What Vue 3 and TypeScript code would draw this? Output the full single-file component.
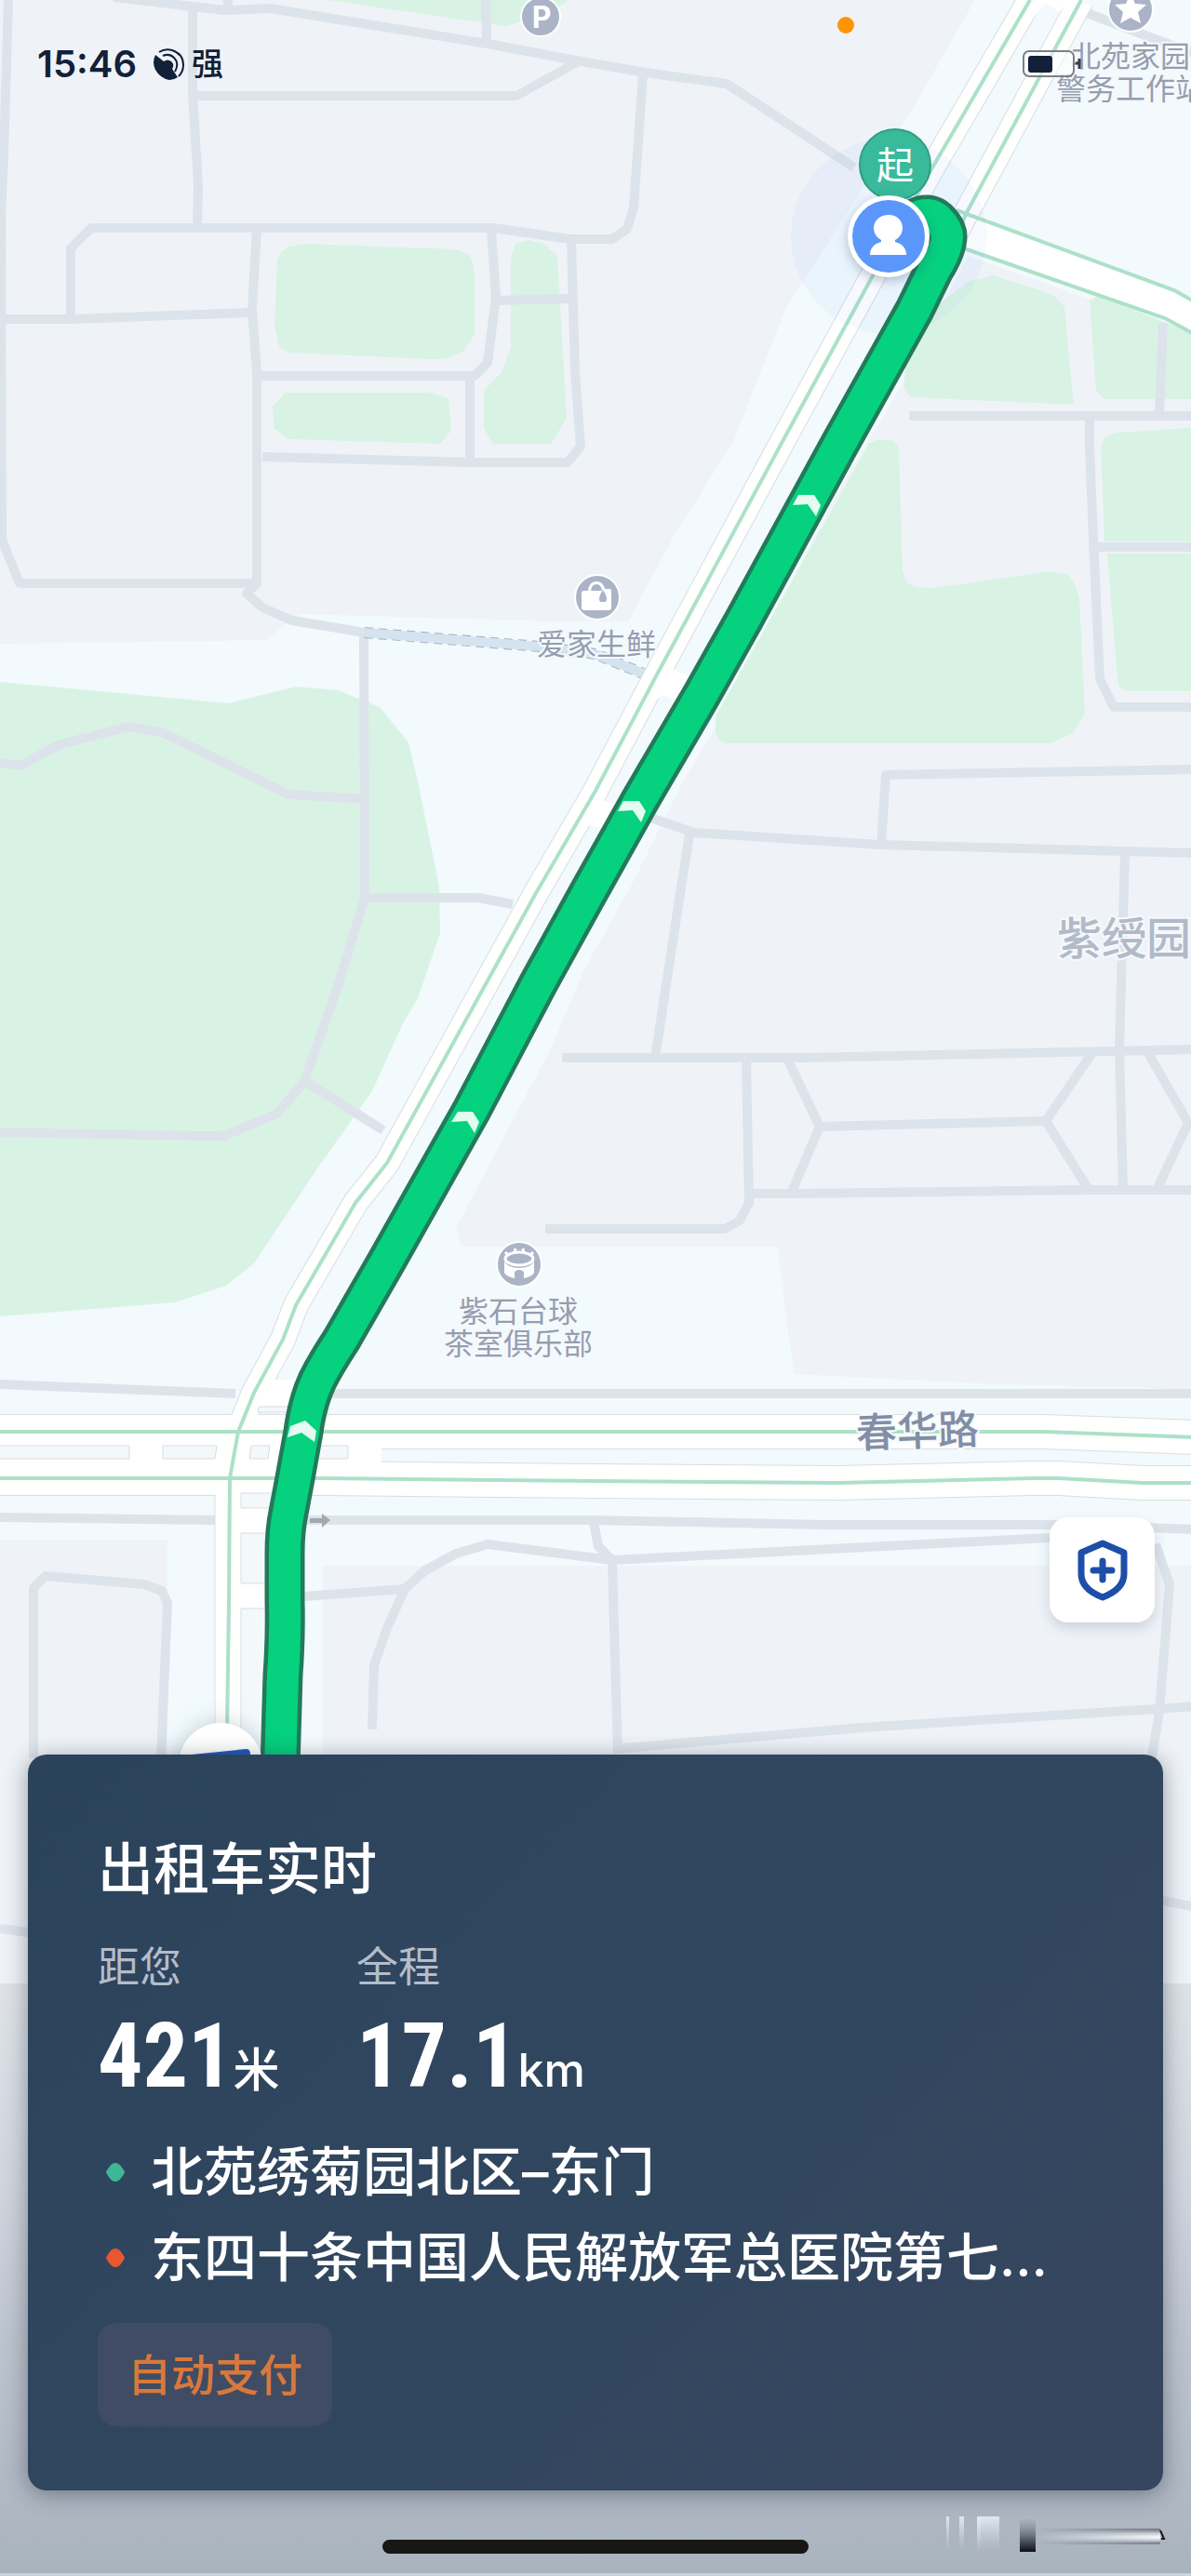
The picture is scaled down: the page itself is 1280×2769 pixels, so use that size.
<script setup lang="ts">
interface Label {
  text: string
  x: number
  y: number
}

interface Metric {
  label: string
  value: string
  unit: string
}

interface Stop {
  kind: 'from' | 'to'
  name: string
}

const blocks: string[] = [
  '0,0 1048,0 979,120 844,333 787,477 726,573 690,640 676,668 600,668 322,660 286,688 0,692',
  '1040,275 1280,360 1280,1493 1073,1488 854,1477 846,1427 836,1340 496,1340 490,1320 592,1127 629,1040 681,947 734,840 770,780 900,530 960,430',
  '0,1655 180,1655 180,2140 0,2140',
  '347,1683 1280,1683 1280,2140 347,2140',
]

const greens: string[] = [
  '351,0 433,12 516,24 543,28 571,20 608,3 610,0',
  '298,280 301,272 310,265 327,262 490,268 504,273 509,284 510,297 510,360 498,378 478,386 461,386 310,379 300,373 295,350',
  '293,437 306,422 463,422 482,428 485,463 473,477 310,472 294,460',
  '549,277 554,262 569,258 584,262 599,275 609,450 592,477 529,477 520,460 520,420 539,400 549,373',
  '1009,327 1040,303 1067,296 1118,312 1134,319 1144,330 1154,435 979,427 971,417 973,393',
  '1171,323 1179,318 1280,357 1280,429 1187,429 1178,420',
  '1183,480 1187,470 1199,465 1280,460 1280,582 1187,582',
  '1190,595 1280,595 1280,743 1211,743 1203,738 1201,730',
  '934,477 942,473 958,473 966,480 970,613 975,627 985,631 1003,632 1130,614 1148,618 1155,628 1160,643 1166,767 1154,787 1130,799 781,799 772,795 769,787 769,770',
  '0,733 245,756 318,738 363,742 408,760 439,798 449,840 472,953 473,1003 449,1073 433,1100 400,1173 343,1253 273,1358 243,1382 188,1400 0,1415',
]

const lanes: string[] = [
  '122,-3 241,11 290,9 524,47 608,63 693,78 781,90 918,180',
  '245,-5 245,11',
  '522,-5 523,46',
  '9,0 4,167 1,233 2,580 21,627 276,627',
  '207,7 207,100 213,200 212,245',
  '212,103 555,103 620,67',
  '76,343 76,267 98,245 531,245 612,257 658,257 674,246 681,223 691,80',
  '2,343 78,343 267,336',
  '276,247 271,333 276,400 276,627 265,638 282,653 314,667 392,680',
  '278,404 510,404 524,390 533,320 528,247',
  '505,405 505,497',
  '535,323 614,321',
  '614,257 618,400 624,480 610,497 506,497 282,491',
  '391,680 392,965 363,1060 327,1163 298,1197 241,1221 204,1221 0,1217',
  '0,820 22,823 65,800 139,781 176,788 310,854 392,859',
  '392,965 514,965 551,972',
  '329,1163 412,1215',
  '1165,10 1171,15 1244,43 1285,58',
  '977,447 1285,447',
  '1250,347 1246,447',
  '1171,447 1171,480 1175,580 1182,730 1197,760 1285,760',
  '1175,588 1285,588',
  '693,877 746,895 946,908 1285,917',
  '741,897 731,960 704,1137',
  '947,908 952,833 1285,827',
  '1209,917 1203,1127 1207,1279',
  '604,1137 864,1137 1285,1128',
  '802,1137 805,1293 795,1312 779,1321 586,1321',
  '808,1283 856,1283 1171,1279 1285,1279',
  '846,1138 881,1211 850,1283',
  '881,1211 1124,1205',
  '1173,1133 1124,1205 1169,1277',
  '1234,1132 1277,1207 1244,1277',
  '0,1488 253,1498',
  '350,1498 1285,1498',
  '0,1631 231,1634',
  '320,1634 631,1634 885,1639 1130,1639 1285,1644',
  '638,1636 643,1662 658,1677',
  '400,1859 402,1790 416,1750 435,1708 457,1688 490,1670 524,1660 658,1677 1128,1653 1160,1651',
  '327,1716 435,1708',
  '658,1680 664,1885',
  '660,1880 926,1857 1244,1837 1285,1834',
  '1242,1660 1257,1703 1246,1840 1238,1888',
  '36,1890 36,1707 49,1694 155,1703 174,1710 180,1723 173,1890',
  '0,2073 36,2078',
  '1244,2042 1285,2050',
]

const crossing = '392,680 580,695 640,703 701,728'

const avenueWest = '1107,0 1001,182 936,300 838,480 705,727 640,850 576,960 416,1250 382,1293 318,1403 304,1440 273,1497 256,1539'
const avenueEast = '1162,0 1038,230 983,333'
const streetUpper = '-5,1539 1122,1539 1285,1545'
const streetLower = '-5,1589 347,1589 640,1592 901,1594 1109,1589 1138,1589 1228,1594 1285,1594'

const openings: string[] = [
  '1112,-4 1152,-4 1139,13 1124,3 1110,20',
  '712,712 728,722 745,729 731,754 713,747 700,755',
  '640,850 646,860 668,865 652,892 631,887 622,894',
  '285,1483 345,1483 330,1512 262,1512',
  '0,1545 410,1545 410,1580 0,1580',
  '232,1600 325,1600 310,1731 300,1890 232,1890',
]

const islands: string[] = [
  '-5,1554 139,1554 139,1568 -5,1568',
  '175,1554 233,1554 231,1568 175,1568',
  '270,1554 290,1554 288,1568 268,1568',
  '325,1554 374,1554 374,1568 325,1568',
  '278,1512 320,1512 320,1518 277,1518',
  '259,1605 310,1605 310,1621 259,1621',
  '259,1648 310,1648 310,1702 259,1702',
  '259,1729 310,1729 310,1900 259,1900',
]

const route =
  'M301 1900 L304 1800 Q307 1760 306 1720 L306 1670 Q306 1645 310 1626 L317 1589 L326 1539 Q330 1508 341 1484 Q350 1466 367 1440 L417 1353 L507 1193 L578 1058 L632 960 L688 860 L754 747 L799 667 L901 480 L983 333 L1004 290 Q1018 268 1018 254 Q1018 246 1008 236 Q998 227 984 234'

const chevrons: string[] = [
  '858,532 875,532 882,543 877,555 868,542 852,543',
  '670,861 687,861 694,872 689,884 680,871 664,872',
  '492,1195 508,1195 515,1206 510,1218 502,1205 485,1206',
  '312,1533 328,1527 340,1538 338,1550 324,1540 309,1545',
]

const poiLabels: Label[] = [
  { text: '北苑家园', x: 1215, y: 72 },
  { text: '警务工作站', x: 1215, y: 107 },
  { text: '爱家生鲜', x: 641, y: 704 },
  { text: '紫石台球', x: 557, y: 1421 },
  { text: '茶室俱乐部', x: 557, y: 1456 },
]

const metrics: Metric[] = [
  { label: '距您', value: '421', unit: '米' },
  { label: '全程', value: '17.1', unit: 'km' },
]

const stops: Stop[] = [
  { kind: 'from', name: '北苑绣菊园北区–东门' },
  { kind: 'to', name: '东四十条中国人民解放军总医院第七…' },
]
</script>

<template>
  <main class="screen">
    <svg class="map" viewBox="0 0 1280 2769" preserveAspectRatio="xMidYMid slice" role="img" aria-label="地图">
      <defs>
        <linearGradient id="shade" x1="0" y1="0" x2="0" y2="1">
          <stop offset="0" stop-color="#dfe3e8" />
          <stop offset="0.35" stop-color="#cfd4dd" />
          <stop offset="0.6" stop-color="#bdc4ce" />
          <stop offset="0.85" stop-color="#b0b9c4" />
          <stop offset="1" stop-color="#a9b3bd" />
        </linearGradient>
        <linearGradient id="bar" x1="0" y1="0" x2="0" y2="1">
          <stop offset="0" stop-color="#8e96a4" stop-opacity="0.2" />
          <stop offset="0.5" stop-color="#6d7380" />
          <stop offset="1" stop-color="#0d0f16" />
        </linearGradient>
        <linearGradient id="glow" x1="0" y1="0" x2="0" y2="1">
          <stop offset="0" stop-color="#e4e9f0" />
          <stop offset="1" stop-color="#c9d0da" stop-opacity="0" />
        </linearGradient>
        <linearGradient id="streak" x1="0" y1="0" x2="0" y2="1">
          <stop offset="0" stop-color="#4a505c" stop-opacity="0.7" />
          <stop offset="0.3" stop-color="#c9ced6" />
          <stop offset="0.55" stop-color="#ffffff" />
          <stop offset="0.75" stop-color="#c9ced6" />
          <stop offset="1" stop-color="#4a505c" stop-opacity="0.6" />
        </linearGradient>
        <linearGradient id="streakFade" x1="0" y1="0" x2="1" y2="0">
          <stop offset="0" stop-color="#000000" />
          <stop offset="1" stop-color="#ffffff" />
        </linearGradient>
        <mask id="fade" maskUnits="userSpaceOnUse" x="1113" y="2710" width="140" height="40">
          <rect x="1113" y="2710" width="140" height="40" fill="url(#streakFade)" />
        </mask>
      </defs>

      <rect class="ground" width="1280" height="2769" />
      <polygon v-for="(p, i) in blocks" :key="`b${i}`" class="block" :points="p" />
      <polygon v-for="(p, i) in greens" :key="`g${i}`" class="green" :points="p" />
      <polyline v-for="(p, i) in lanes" :key="`l${i}`" class="lane" :points="p" />

      <polyline class="crossing-edge" :points="crossing" />
      <polyline class="crossing" :points="crossing" />

      <polygon class="road-fill" points="1028,226 1262,312 1285,325 1285,360 1252,342 1036,267" />
      <polyline class="casing avenue" :points="avenueWest" />
      <polyline class="casing avenue" :points="avenueEast" />
      <polyline class="casing street" :points="streetUpper" />
      <polyline class="casing street" :points="streetLower" />
      <rect class="casing-box" x="231" y="1600" width="28" height="300" />
      <polyline class="paving avenue" :points="avenueWest" />
      <polyline class="paving avenue" :points="avenueEast" />
      <polyline class="paving street" :points="streetUpper" />
      <polyline class="paving street" :points="streetLower" />
      <polygon v-for="(p, i) in openings" :key="`o${i}`" class="road-fill" :points="p" />
      <polygon v-for="(p, i) in islands" :key="`i${i}`" class="island" :points="p" />

      <polyline class="traffic" :points="avenueWest" />
      <polyline class="traffic" points="1162,0 1038,230 1030,250" />
      <polyline class="traffic" points="256,1539 247,1589 246,1723 244,1860" />
      <polyline class="traffic" :points="streetUpper" />
      <polyline class="traffic" :points="streetLower" />
      <polyline class="traffic" points="1028,226 1262,312 1285,325" />
      <polyline class="traffic" points="1036,267 1252,342 1285,360" />

      <path class="one-way" d="M333 1632h13v-5l9 7-9 8v-5h-13z" />

      <g class="halo-text">
        <text v-for="l in poiLabels" :key="l.text" class="poi" :x="l.x" :y="l.y">{{ l.text }}</text>
        <text class="district" x="1208" y="1026">紫绶园</text>
        <text class="street-name" x="986" y="1554" transform="rotate(-2 986 1540)">春华路</text>
      </g>

      <g class="pin">
        <circle cx="581" cy="18" r="21" />
        <circle cx="1215" cy="10" r="24" />
        <circle cx="642" cy="642" r="24" />
        <circle cx="558" cy="1359" r="24" />
      </g>
      <text class="parking" x="582" y="30">P</text>
      <path class="glyph" d="M1215 -7l5 11 12 1-9 8 3 12-11-6-11 6 3-12-9-8 12-1z" />
      <path class="glyph" d="M628 635h4q1-10 9-10 7 0 9 8h5q2 0 2 2v18q0 3-3 3h-26q-3 0-3-3v-16q0-2 3-2zm7 0h12q-1-7-6-7t-6 7z" fill-rule="evenodd" />
      <path class="glyph-line" d="M648 634q-6 9-3 13h6q3-4-3-13z" />
      <ellipse class="rim" cx="558" cy="1353" rx="15" ry="7" />
      <path class="glyph" d="M542 1356q4 7 16 7t16-7v12q-2 4-11 6v-7q-5-4-10 0v7q-9-2-11-6z" />
      <path class="rim" d="M553 1347l1-5M563 1347l-1-5M546 1349l-3-3M570 1349l3-3" />

      <circle class="accuracy" cx="955" cy="254" r="105" />
      <circle class="start" cx="962" cy="177" r="38" />
      <text class="start-text" x="962" y="192">起</text>
      <path class="route-edge" :d="route" />
      <path class="route" :d="route" />
      <polygon v-for="(p, i) in chevrons" :key="`c${i}`" class="chevron" :points="p" />

      <circle class="me" cx="955" cy="254" r="44" />
      <circle class="me-disc" cx="955" cy="254" r="39" />
      <path class="glyph" d="M955 231c9 0 15 6 15 14 0 6-3 10-8 13v2c8 2 12 7 12 14h-39c0-7 4-12 12-14v-2c-5-3-8-7-8-13 0-8 7-14 16-14z" />

      <circle class="cab" cx="237" cy="1897" r="45" />
      <path class="cab-body" d="M206 1886l59-6q4 0 4 6v10h-63z" />

      <rect x="0" y="2132" width="1280" height="637" fill="url(#shade)" />
      <rect x="0" y="2766" width="1280" height="3" fill="#c9d3dd" />
      <g>
        <rect x="1017" y="2705" width="3" height="38" fill="url(#glow)" />
        <rect x="1031" y="2705" width="5" height="38" fill="url(#glow)" />
        <rect x="1050" y="2705" width="24" height="38" fill="url(#glow)" />
        <rect x="1050" y="2705" width="4" height="38" fill="url(#glow)" />
        <rect x="1096" y="2708" width="17" height="35" fill="url(#bar)" />
        <rect x="1113" y="2718" width="134" height="17" fill="url(#streak)" mask="url(#fade)" />
        <path d="M1247 2720l4 9h-3" fill="none" stroke="#16181d" stroke-width="2" />
      </g>
    </svg>

    <header class="status">
      <div class="status-side">
        <time class="clock">15:46</time>
        <svg class="signal" viewBox="0 0 36 36" aria-hidden="true">
          <path d="M4 8Q0 16 4 24q5 9 15 11 5 0 9-3l-6-9q3-5-1-8-4-3-8 0Z" fill="currentColor" />
          <path d="M8 5q6-4 14-2 12 4 12 16 0 7-5 12" fill="none" stroke="currentColor" stroke-width="2" />
          <path d="M12 9q7-3 12 2 6 6 1 15" fill="none" stroke="currentColor" stroke-width="2" />
        </svg>
        <span class="strength">强</span>
      </div>
      <i class="mic"></i>
      <svg class="battery" viewBox="0 0 64 30" aria-hidden="true">
        <rect x="1" y="1" width="54" height="27" rx="6" fill="#ffffff" fill-opacity="0.5" stroke="#7c8086" stroke-width="2" />
        <rect x="6" y="6" width="26" height="18" rx="3" fill="#12203a" />
        <path d="M57 14h5M61 9v11" stroke="#3a3f49" stroke-width="3" />
      </svg>
    </header>

    <div class="lower">
      <button class="safety" type="button" aria-label="安全中心">
        <svg viewBox="0 0 56 66" aria-hidden="true">
          <path d="M28 4 51 14V37Q51 53 28 62 5 53 5 37V14Z" />
          <path d="M28 23V43M18 33H38" />
        </svg>
      </button>

      <section class="card">
        <h1 class="title">出租车实时</h1>
        <dl class="metrics">
          <div v-for="m in metrics" :key="m.label" class="metric">
            <dt>{{ m.label }}</dt>
            <dd><span class="value">{{ m.value }}</span><span class="unit">{{ m.unit }}</span></dd>
          </div>
        </dl>
        <ul class="stops">
          <li v-for="s in stops" :key="s.kind" class="stop">
            <svg class="dot" :class="s.kind" viewBox="0 0 20 20" aria-hidden="true">
              <path d="M10 0Q14 0 17 5 20 9 20 10 20 11 17 15 14 20 10 20 6 20 3 15 0 11 0 10 0 9 3 5 6 0 10 0Z" />
            </svg>
            <span class="stop-name">{{ s.name }}</span>
          </li>
        </ul>
        <span class="tag">自动支付</span>
      </section>
      <div class="home"></div>
    </div>
  </main>
</template>

<style>
body {
  margin: 0;
}
</style>

<style scoped>
.screen {
  position: relative;
  display: flex;
  flex-direction: column;
  justify-content: space-between;
  min-height: 100vh;
  overflow: hidden;
  background: #f2fafd;
  font-family: Inter, "Noto Sans CJK SC", sans-serif;
}

.map {
  position: absolute;
  inset: 0;
  width: 100%;
  height: 100%;
}

.ground {
  fill: #f2fafd;
}

.block {
  fill: #eff3f8;
}

.green {
  fill: #d8f3e3;
}

.lane {
  fill: none;
  stroke: #dde3ea;
  stroke-width: 10;
  stroke-linejoin: round;
}

.crossing-edge {
  fill: none;
  stroke: #a9b3bf;
  stroke-width: 12;
  stroke-dasharray: 9 6;
}

.crossing {
  fill: none;
  stroke: #d5e3f0;
  stroke-width: 10;
}

.casing {
  fill: none;
  stroke: #d9dddf;
}

.casing.avenue {
  stroke-width: 28;
}

.casing.street {
  stroke-width: 38;
}

.casing-box {
  fill: #ffffff;
  stroke: #d9dddf;
}

.paving {
  fill: none;
  stroke: #ffffff;
}

.paving.avenue {
  stroke-width: 26;
}

.paving.street {
  stroke-width: 36;
}

.road-fill {
  fill: #ffffff;
}

.island {
  fill: #f3f9fb;
  stroke: #d9dddf;
}

.traffic {
  fill: none;
  stroke: #ace1c8;
  stroke-width: 4;
}

.one-way {
  fill: #a3a8ae;
}

.halo-text text {
  text-anchor: middle;
  paint-order: stroke;
  stroke: #f5f9fc;
  stroke-width: 4;
  stroke-linejoin: round;
}

.poi {
  font-size: 32px;
  fill: #959eb0;
}

.district {
  font-size: 48px;
  font-weight: 500;
  fill: #b2bac8;
}

.street-name {
  font-size: 44px;
  font-weight: 500;
  fill: #828ea5;
}

.pin circle {
  fill: #abb4c7;
  stroke: #ffffff;
  stroke-width: 2;
}

.parking {
  font-size: 32px;
  font-weight: 700;
  text-anchor: middle;
  fill: #ffffff;
}

.glyph {
  fill: #ffffff;
}

.glyph-line {
  fill: #abb4c7;
}

.rim {
  fill: none;
  stroke: #ffffff;
  stroke-width: 3;
}

.accuracy {
  fill: #7898fa;
  fill-opacity: 0.06;
}

.start {
  fill: #38ba9b;
  stroke: #2e9f84;
  stroke-width: 2;
}

.start-text {
  font-size: 40px;
  text-anchor: middle;
  fill: #ffffff;
}

.route-edge {
  fill: none;
  stroke: #237a5a;
  stroke-width: 43;
  stroke-linejoin: round;
  stroke-linecap: round;
}

.route {
  fill: none;
  stroke: #05d17e;
  stroke-width: 34;
  stroke-linejoin: round;
  stroke-linecap: round;
}

.chevron {
  fill: #e3fbf0;
}

.me {
  fill: #ffffff;
  filter: drop-shadow(0 4px 6px rgba(40, 60, 100, 0.3));
}

.me-disc {
  fill: #5b97fb;
}

.cab {
  fill: #ffffff;
  filter: drop-shadow(0 0 12px rgba(40, 60, 100, 0.25));
}

.cab-body {
  fill: #2257bd;
}

.status {
  position: relative;
  display: flex;
  justify-content: space-between;
  align-items: center;
  height: 48px;
  padding: 45px 117px 0 40px;
  color: #12203a;
}

.status-side {
  display: flex;
  align-items: center;
}

.clock {
  font-size: 40px;
  font-weight: 600;
  line-height: 48px;
}

.signal {
  width: 36px;
  height: 36px;
  margin-left: 16px;
}

.strength {
  margin-left: 7px;
  font-size: 34px;
  font-weight: 500;
  line-height: 48px;
}

.mic {
  position: absolute;
  top: 18px;
  left: calc(71% - 9px);
  width: 18px;
  height: 18px;
  border-radius: 50%;
  background: #ff9500;
}

.battery {
  width: 64px;
  height: 30px;
}

.lower {
  position: relative;
  display: flex;
  flex-direction: column;
  padding: 0 30px 24px;
}

.safety {
  display: flex;
  justify-content: center;
  align-items: center;
  align-self: flex-end;
  width: 113px;
  height: 113px;
  margin: 0 9px 142px 0;
  padding: 0;
  border: 0;
  border-radius: 20px;
  background: #ffffff;
  box-shadow: 0 6px 14px rgba(60, 80, 110, 0.2);
}

.safety svg {
  width: 56px;
  height: 66px;
  fill: none;
  stroke: #1d4fa8;
  stroke-width: 7;
  stroke-linecap: round;
  stroke-linejoin: round;
}

.card {
  display: flex;
  flex-direction: column;
  align-items: flex-start;
  padding: 87px 75px 69px;
  border-radius: 20px;
  background: linear-gradient(135deg, #2b425b 0%, #30465f 35%, #31475f 60%, #36465f 85%);
  box-shadow: 0 4px 24px rgba(30, 40, 55, 0.45);
  color: #ffffff;
}

.title {
  margin: 0 0 42px;
  font-size: 60px;
  font-weight: 500;
  line-height: 72px;
}

.metrics {
  display: flex;
  margin: 0;
}

.metric {
  min-width: 278px;
}

.metric dt {
  font-size: 45px;
  line-height: 56px;
  color: #b4bdc9;
}

.metric dd {
  display: flex;
  align-items: baseline;
  height: 134px;
  margin: 0 0 24px;
  line-height: 134px;
}

.value {
  font-family: "Roboto Condensed", Roboto, sans-serif;
  font-size: 96px;
  font-weight: 700;
}

.unit {
  font-size: 50px;
  font-weight: 500;
}

.stops {
  display: flex;
  flex-direction: column;
  gap: 24px;
  align-self: stretch;
  margin: 0 0 36px;
  padding: 0;
  list-style: none;
}

.stop {
  display: flex;
  align-items: center;
  gap: 28px;
  padding-left: 9px;
}

.dot {
  flex: none;
  width: 20px;
  height: 20px;
}

.dot.from {
  fill: #3eb797;
}

.dot.to {
  fill: #e8572f;
}

.stop-name {
  overflow: hidden;
  font-size: 57px;
  font-weight: 500;
  line-height: 68px;
  text-overflow: ellipsis;
  white-space: nowrap;
}

.tag {
  padding: 0 32px;
  border-radius: 20px;
  background: #3f4c63;
  font-size: 47px;
  font-weight: 500;
  line-height: 111px;
  color: #d8783d;
}

.home {
  align-self: center;
  width: 458px;
  max-width: 60%;
  height: 15px;
  margin-top: 53px;
  border-radius: 8px;
  background: #171715;
}
</style>
